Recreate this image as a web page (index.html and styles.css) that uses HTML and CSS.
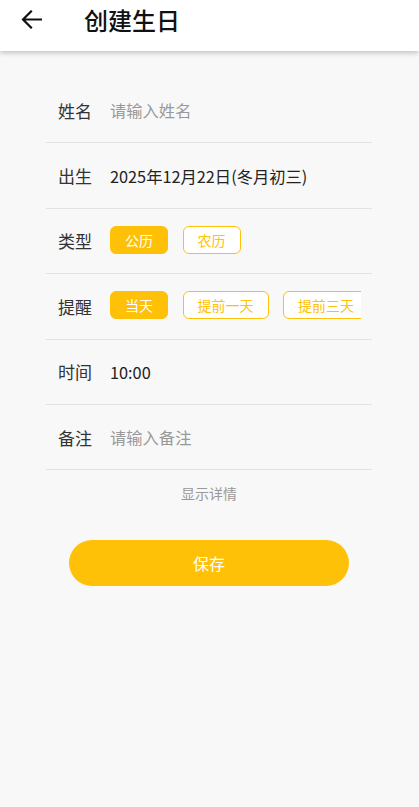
FILE: index.html
```html
<!DOCTYPE html>
<html lang="zh-CN">
<head>
  <meta charset="UTF-8" />
  <meta name="viewport" content="width=device-width, initial-scale=1.0"/>
  <title>创建生日</title>
  <link rel="stylesheet" href="styles.css">
</head>
<body>
  <header class="topbar">
    <button class="back" aria-label="返回">
      <svg width="21" height="19" viewBox="0 0 21 19"><path d="M20 9.5H2.5M10 1.5L2 9.5l8 8" fill="none" stroke="#111" stroke-width="2.2" stroke-linecap="square"/></svg>
    </button>
    <h1>创建生日</h1>
  </header>

  <main class="form">
    <div class="row">
      <span class="label">姓名</span>
      <span class="value placeholder">请输入姓名</span>
    </div>
    <div class="row">
      <span class="label">出生</span>
      <span class="value">2025年12月22日(冬月初三)</span>
    </div>
    <div class="row">
      <span class="label">类型</span>
      <div class="chips">
        <span class="chip on">公历</span>
        <span class="chip">农历</span>
      </div>
    </div>
    <div class="row">
      <span class="label">提醒</span>
      <div class="chips">
        <span class="chip on">当天</span>
        <span class="chip">提前一天</span>
        <span class="chip">提前三天</span>
      </div>
    </div>
    <div class="row">
      <span class="label">时间</span>
      <span class="value">10:00</span>
    </div>
    <div class="row">
      <span class="label">备注</span>
      <span class="value placeholder">请输入备注</span>
    </div>

    <p class="more">显示详情</p>
    <button class="save">保存</button>
  </main>
</body>
</html>
```

FILE: styles.css
```css
* { box-sizing: border-box; }
body { margin: 0; background: #f8f8f8; font-family: "Noto Sans CJK SC", "Noto Sans", sans-serif; color: #222; min-height: 807px; }

.topbar { height: 51px; background: #fff; display: flex; align-items: center; padding-left: 21px; box-shadow: 0 2px 5px rgba(0,0,0,0.22); position: relative; }
.topbar h1 { margin: 0 0 12px 42px; font-size: 24px; font-weight: 500; color: #111; }
.back { border: none; background: none; padding: 0; margin-bottom: 13px; display: flex; }

.form { padding: 27px 47px 0 46px; }
.row { height: 65.4px; display: flex; align-items: center; padding: 0 11px 0 12px; border-bottom: 1px solid #e2e2e2; }
.label { width: 52px; flex: none; font-size: 17px; color: #333; }
.value { font-size: 16.3px; color: #222; }
.placeholder { color: #999; }

.chips { display: flex; gap: 14.5px; overflow: hidden; flex: 1; min-width: 0; margin-top: -2px; }
.chip { flex: none; height: 28px; line-height: 26px; padding: 0 14px; font-size: 14px; border: 1px solid #ffc107; border-radius: 6px; background: #fff; color: #ffc107; }
.chip.on { background: #ffc107; color: #fff; }

.more { margin: 13px 0 0; text-align: center; font-size: 14px; color: #999; line-height: 20px; }
.save { display: block; width: 280px; height: 46px; margin: 37px auto 0; border: none; border-radius: 23px; background: #ffc107; color: #fff; font-family: inherit; font-size: 16px; }
```
